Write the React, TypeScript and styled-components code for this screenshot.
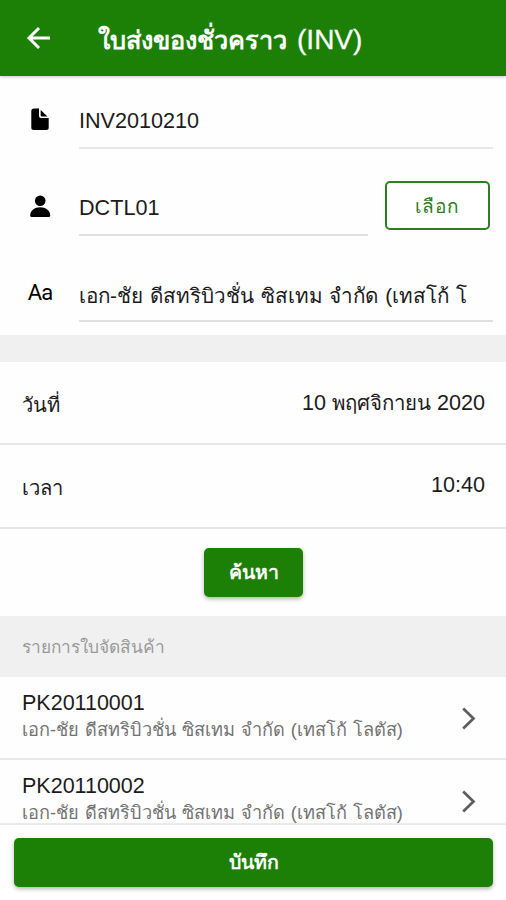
import React from 'react';
import styled, { createGlobalStyle } from 'styled-components';

const GlobalStyle = createGlobalStyle`
  * { box-sizing: border-box; }
  body {
    margin: 0;
    background: #fff;
    color: #1c1c1c;
    font-family: "Liberation Sans", Arial, sans-serif;
  }
  button { font-family: inherit; cursor: pointer; padding: 0; }
`;

const Screen = styled.div`
  width: 506px;
  height: 900px;
  display: flex;
  flex-direction: column;
  overflow: hidden;
  background: #fefefe;
`;

const Header = styled.header`
  flex: none;
  height: 76px;
  display: flex;
  align-items: center;
  padding: 0 26px;
  background: #1b8005;
  color: #fff;
  box-shadow: 0 1px 3px rgba(0, 0, 0, 0.22);
  z-index: 1;
`;

const BackButton = styled.button`
  display: flex;
  width: 25px;
  height: 24px;
  margin-right: 47px;
  border: 0;
  background: none;
  color: inherit;
`;

const Title = styled.h1`
  margin: 4px 0 0;
  font-size: 25.3px;
  line-height: 40px;
  font-weight: 700;
  white-space: nowrap;
`;

const TitleCode = styled.span`
  margin-left: 3px;
  font-size: 28px;
  font-weight: 400;
  -webkit-text-stroke: 0.3px currentColor;
`;

const Content = styled.main`
  flex: 1;
  min-height: 0;
  overflow: hidden;
`;

const Form = styled.section`
  height: 259px;
  padding: 0 13px 0 26px;
`;

const FieldRow = styled.div<{ $height: number }>`
  display: flex;
  align-items: flex-end;
  height: ${p => p.$height}px;
`;

const FieldIcon = styled.div<{ $bottom: number }>`
  flex: none;
  width: 28px;
  display: flex;
  justify-content: center;
  margin: 0 25px ${p => p.$bottom}px 0;
  color: #000;
`;

const TextGlyph = styled.span`
  font-family: Roboto, sans-serif;
  font-size: 22px;
  letter-spacing: -0.8px;
  line-height: 24px;
`;

const FieldValue = styled.div<{ $thai?: boolean; $thick?: boolean }>`
  flex: 1;
  min-width: 0;
  height: 54px;
  padding-top: ${p => (p.$thai ? 13 : 11)}px;
  border-bottom: 2px solid ${p => (p.$thick ? '#e7e7e7' : '#e0e0e0')};
  font-size: ${p => (p.$thai ? 20.65 : 21.6)}px;
  word-spacing: ${p => (p.$thai ? 1.1 : 0)}px;
  line-height: 30px;
  white-space: nowrap;
`;

const OutlineButton = styled.button`
  flex: none;
  width: 105px;
  height: 49px;
  margin: 0 3px 6px 17px;
  border: 2px solid #2c7e20;
  border-radius: 5px;
  background: #fff;
  color: #2c7e20;
  font-size: 19px;
  letter-spacing: 1px;
`;

const Divider = styled.div`
  height: 27px;
  background: #f0f0f0;
`;

const DetailRow = styled.div<{ $height: number }>`
  display: flex;
  justify-content: space-between;
  height: ${p => p.$height}px;
  padding: 26px 21px 0 22px;
  border-bottom: 2px solid #e6e6e6;
  line-height: 30px;
  white-space: nowrap;
`;

const DetailLabel = styled.span`
  margin-top: 2px;
  font-size: 20.2px;
`;

const DetailValue = styled.span<{ $raised?: boolean }>`
  margin-top: ${p => (p.$raised ? -1 : 0)}px;
  font-size: 21.6px;
`;

const Month = styled.span`
  font-size: 20.4px;
`;

const SearchArea = styled.div`
  display: flex;
  justify-content: center;
  height: 87px;
  padding: 19px 0 0 1px;
`;

const SolidButton = styled.button<{ $width: string }>`
  width: ${p => p.$width};
  height: 49px;
  border: 0;
  border-radius: 5px;
  background: #1b8005;
  color: #fff;
  font-size: 19.5px;
  font-weight: 700;
  box-shadow: 0 2px 4px rgba(0, 0, 0, 0.3);
`;

const ListHeading = styled.h2`
  height: 61px;
  margin: 0;
  padding: 1px 22px 0;
  background: #f0f0f0;
  color: #999;
  font-size: 17.3px;
  font-weight: 400;
  line-height: 60px;
`;

const ListItem = styled.article`
  display: flex;
  justify-content: space-between;
  height: 83px;
  padding: 12px 29px 0 22px;
  border-bottom: 2px solid #e8e8e8;
`;

const ItemText = styled.div`
  white-space: nowrap;
`;

const ItemCode = styled.div`
  height: 28px;
  font-size: 21.5px;
  line-height: 28px;
`;

const ItemCustomer = styled.div`
  color: #727272;
  font-size: 18.15px;
  word-spacing: 0.9px;
  line-height: 27px;
`;

const Chevron = styled.svg`
  width: 16px;
  height: 24px;
  margin-top: 17px;
`;

const Footer = styled.footer`
  flex: none;
  height: 77px;
  padding: 13px 13px 0 14px;
  border-top: 2px solid #ebebeb;
  background: #fff;
`;

const items = [
  { code: 'PK20110001', customer: 'เอก-ชัย ดีสทริบิวชั่น ซิสเทม จำกัด (เทสโก้ โลตัส)' },
  { code: 'PK20110002', customer: 'เอก-ชัย ดีสทริบิวชั่น ซิสเทม จำกัด (เทสโก้ โลตัส)' },
];

export default function App() {
  return (
    <>
      <GlobalStyle />
      <Screen>
        <Header>
          <BackButton aria-label="ย้อนกลับ">
            <svg width="25" height="24" viewBox="0 0 25 24" fill="none" stroke="currentColor" strokeWidth="3">
              <path d="M13 2 3 12 13 22M3 12H24" />
            </svg>
          </BackButton>
          <Title>ใบส่งของชั่วคราว <TitleCode>(INV)</TitleCode></Title>
        </Header>
        <Content>
          <Form>
            <FieldRow $height={73}>
              <FieldIcon $bottom={18}>
                <svg width="18" height="23" viewBox="0 0 18 23" fill="currentColor">
                  <path d="M3 .5h5V8q0 2 2 2h7.700V20q0 2-2.200 2H2.500Q.3 22 .3 20V3Q.3.5 3 .5Z" />
                  <path d="M9.700 2 16.500 8.600H10.500Q9.700 8.600 9.700 7.800Z" />
                </svg>
              </FieldIcon>
              <FieldValue $thick>INV2010210</FieldValue>
            </FieldRow>
            <FieldRow $height={87}>
              <FieldIcon $bottom={18}>
                <svg width="21" height="23" viewBox="0 0 21 23" fill="currentColor">
                  <circle cx="10.200" cy="5.800" r="5.300" />
                  <path d="M.2 20.500C.2 15.500 4.700 12.300 10.200 12.300s10 3.200 10 8.200q0 1.500-1.500 1.500H1.700Q.2 22 .2 20.500Z" />
                </svg>
              </FieldIcon>
              <FieldValue>DCTL01</FieldValue>
              <OutlineButton>เลือก</OutlineButton>
            </FieldRow>
            <FieldRow $height={86}>
              <FieldIcon $bottom={17}><TextGlyph>Aa</TextGlyph></FieldIcon>
              <FieldValue $thai>เอก-ชัย ดีสทริบิวชั่น ซิสเทม จำกัด (เทสโก้ โ</FieldValue>
            </FieldRow>
          </Form>
          <Divider />
          <DetailRow $height={83}>
            <DetailLabel>วันที่</DetailLabel>
            <DetailValue>10 <Month>พฤศจิกายน</Month> 2020</DetailValue>
          </DetailRow>
          <DetailRow $height={84}>
            <DetailLabel>เวลา</DetailLabel>
            <DetailValue $raised>10:40</DetailValue>
          </DetailRow>
          <SearchArea>
            <SolidButton $width="99px">ค้นหา</SolidButton>
          </SearchArea>
          <ListHeading>รายการใบจัดสินค้า</ListHeading>
          {items.map(item => (
            <ListItem key={item.code}>
              <ItemText>
                <ItemCode>{item.code}</ItemCode>
                <ItemCustomer>{item.customer}</ItemCustomer>
              </ItemText>
              <Chevron viewBox="0 0 16 24" fill="none" stroke="#5c5c5c" strokeWidth="2.700">
                <path d="M2.200 2.500 12.500 12.500 2.200 22.500" />
              </Chevron>
            </ListItem>
          ))}
        </Content>
        <Footer>
          <SolidButton $width="100%">บันทึก</SolidButton>
        </Footer>
      </Screen>
    </>
  );
}
